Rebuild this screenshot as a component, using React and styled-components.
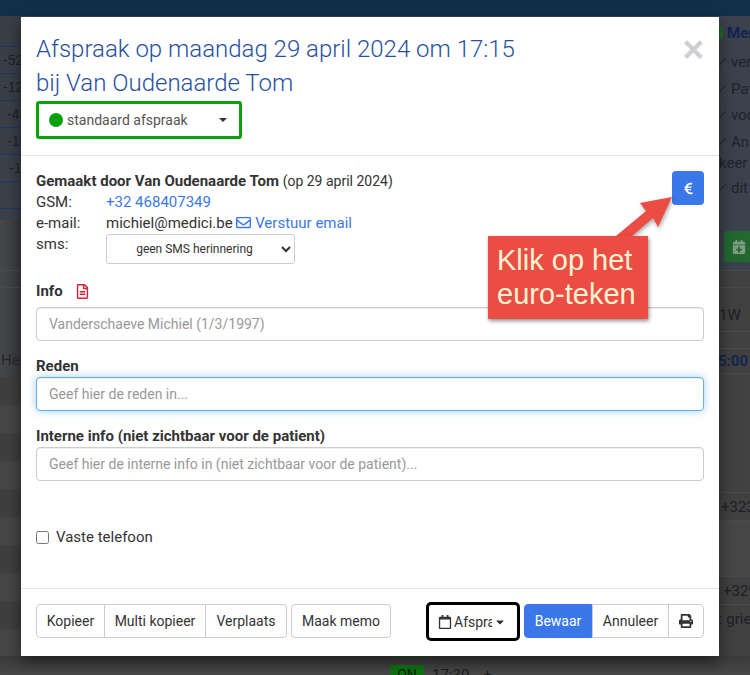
import React from "react";
import styled, { createGlobalStyle } from "styled-components";
import { FaEuroSign, FaRegEnvelope, FaRegFileAlt, FaRegCalendar, FaPrint, FaCaretDown, FaCalendarPlus } from "react-icons/fa";
import { Check } from "lucide-react";

const Global = createGlobalStyle`
  html, body { margin: 0; padding: 0; }
  body { font-family: Roboto, "Liberation Sans", sans-serif; font-size: 14px; color: #333; overflow: hidden; }
  * { box-sizing: border-box; }
`;
const Page = styled.div`
  position: relative; width: 750px; height: 675px; overflow: hidden; background: #414141;
  display: flex; flex-direction: column;
`;
const TopBar = styled.div`height: 16px; flex: none; background: #12304a;`;
const Middle = styled.div`flex: 1; display: flex; justify-content: space-between; min-height: 0;`;
const LeftStrip = styled.div`
  width: 21px; overflow: hidden; display: flex; flex-direction: column;
  background: linear-gradient(90deg, #47484a 0, #3a3b3f 100%);
`;
const TableBlock = styled.div`
  padding-top: 30px; height: 204px; flex: none; background: linear-gradient(180deg, #3a3e46, #3b404a);
`;
const NumRow = styled.div`
  height: 27px; border-top: 1px solid #1b3a6a; display: flex; align-items: center;
  white-space: nowrap; font-family: "Liberation Sans", sans-serif; color: #1f2024; font-size: 14px;
  padding-left: ${p => p.$x || 0}px;
`;
const FaintRow = styled.div`height: 17px; border-top: 1px solid #4a4a4a; flex: none; margin-top: ${p => p.$mt || 0}px;`;
const HeText = styled.div`margin-top: 47px; padding-left: 1px; font-size: 15px; color: #26282c; white-space: nowrap;`;
const Bands = styled.div`
  flex: 1; margin-top: 8px;
  background: repeating-linear-gradient(180deg, #3f3f3f 0 28px, #464646 28px 56px);
`;
const RightStrip = styled.div`
  width: 31px; overflow: hidden; display: flex; flex-direction: column; white-space: nowrap;
  background: #3c424d; font-size: 15px;
`;
const MerRow = styled.div`
  padding: 8px 0 0 0; height: 33px; flex: none; display: flex; gap: 4px; color: #102454; font-weight: 700; font-size: 15px;
`;
const GreenTick = styled.span`width: 4px; height: 12px; margin-top: 3px; background: #1f6b2a; flex: none;`;
const CheckRow = styled.div`
  height: ${p => p.$h || 26.5}px; flex: none; display: flex; align-items: center; gap: 3px; color: #1f232b;
  svg { color: #18261c; margin-left: -5px; flex: none; }
`;
const GreenButton = styled.div`
  margin: 26px 0 0 5px; width: 40px; height: 31px; flex: none; background: #23682f; border-radius: 3px 0 0 3px;
  display: flex; align-items: center; padding-left: 8px; color: #7d9d84;
`;
const RightRows = styled.div`
  flex: 1; margin-top: 8px; display: flex; flex-direction: column; background: #414141;
`;
const RightCell = styled.div`
  height: ${p => p.$h}px; flex: none; border-top: 1px solid #4b4b4b; color: ${p => p.$c || "#1d2026"}; font-weight: ${p => p.$w || 400};
  display: flex; align-items: center; padding: ${p => p.$t || 0}px 0 0 ${p => p.$l || 0}px;
  background: ${p => p.$bg || "transparent"};
`;
const ClippedTime = styled.span`margin-left: -1px;`;
const BottomStrip = styled.div`
  height: 19px; flex: none; background: linear-gradient(180deg, #3a3a3a, #484848); padding-left: 390px; overflow: hidden;
  color: #1c1c1c; font-size: 15px;
`;
const PrevBadge = styled.div`width: 38px; height: 2px; background: #2a4a2a; border-radius: 0 0 2px 2px; margin-bottom: 7px;`;
const BottomRow = styled.div`display: flex; align-items: flex-start;`;
const OnBadge = styled.span`
  width: 34px; height: 24px; background: #0f7312; color: #0c1c0c; text-align: center; border-radius: 2px; line-height: 20px; margin-right: 8px; font-size: 14px;
`;
const TimeText = styled.span`line-height: 20px; margin-right: ${p => p.$mr || 0}px;`;

const Modal = styled.div`
  position: absolute; top: 17px; left: 21px; width: 698px; height: 639px; background: #fff;
  display: flex; flex-direction: column; box-shadow: 0 5px 15px rgba(0,0,0,.5);
`;
const Header = styled.header`
  height: 139px; flex: none; padding: 15px 15px 0; border-bottom: 1px solid #e5e5e5; position: relative;
`;
const Title = styled.h4`
  margin: 0; font-weight: 300; font-size: 24px; line-height: 34px; color: #2850a0;
`;
const CloseX = styled.span`
  position: absolute; top: 10px; right: 15px; font-size: 37px; line-height: 46px; font-weight: 700; color: #cfcfcf;
  font-family: "Liberation Sans", sans-serif;
`;
const TypeSelect = styled.div`
  width: 206px; height: 38px; border: 3px solid #09a309; border-radius: 3px; margin-top: 1px; padding: 0 12px 0 10px;
  display: flex; align-items: center; color: #555; font-size: 14px; gap: 4px;
`;
const Dot = styled.span`width: 14px; height: 14px; border-radius: 50%; background: #0aa00a; flex: none;`;
const Caret = styled.span`
  margin-left: auto; width: 0; height: 0; border-left: 4.5px solid transparent; border-right: 4.5px solid transparent; border-top: 4.5px solid #333;
`;
const Body = styled.main`flex: 1; padding: 15px 15px 0; display: flex; flex-direction: column; min-height: 0;`;
const InfoBlock = styled.div`display: flex; justify-content: space-between; align-items: flex-start; height: 110px;`;
const InfoLines = styled.div`display: flex; flex-direction: column; font-size: 15px;`;
const MadeBy = styled.div`line-height: 20px; height: 21px; b { font-weight: 700; }`;
const MadeOn = styled.span`font-size: 14px;`;
const Line = styled.div`display: flex; line-height: 21px; height: 21px;`;
const LineKey = styled.span`width: 70px; flex: none;`;
const Link = styled.a`color: #3a78ea; text-decoration: none; svg { vertical-align: -2px; }`;
const SmsSelect = styled.select`
  width: 189px; height: 30px; margin-top: 0; background: #fff; border: 1px solid #ccc; border-radius: 3px; font-family: Roboto, sans-serif;
  font-size: 12px; color: #333; text-align: center; text-align-last: center;
`;
const EuroButton = styled.button`
  width: 32px; height: 34px; border: 0; border-radius: 4px; background: #3a78ea; color: #fff; padding: 0;
  display: flex; align-items: center; justify-content: center;
`;
const Label = styled.label`
  display: flex; align-items: center; gap: 12px; height: 20px; font-size: 15px; font-weight: 700; color: #333; margin-bottom: ${p => p.$mb ?? 5}px;
  svg { color: #dc1d36; }
`;
const Field = styled.div`height: ${p => p.$h}px; flex: none;`;
const Input = styled.input`
  display: block; width: 100%; height: 34px; border: 1px solid ${p => (p.$focus ? "#66afe9" : "#ccc")}; border-radius: 4px; padding: 0 12px;
  font-family: Roboto, sans-serif; font-size: 14px; color: #555; outline: none;
  box-shadow: ${p => (p.$focus ? "inset 0 1px 1px rgba(0,0,0,.075), 0 0 8px rgba(102,175,233,.6)" : "inset 0 1px 1px rgba(0,0,0,.075)")};
  &::placeholder { color: #999; opacity: 1; }
`;
const CheckLine = styled.label`display: flex; align-items: center; gap: 7px; margin-top: 32px; font-size: 15px; color: #333;
  input { margin: 0; width: 13px; height: 13px; }
`;
const Footer = styled.footer`
  height: 68px; flex: none; border-top: 1px solid #e5e5e5; padding: 15px 15px 0; display: flex; justify-content: space-between; align-items: flex-start;
`;
const Group = styled.div`display: flex; align-items: flex-start; gap: ${p => p.$gap || 0}px;`;
const Btn = styled.button`
  height: 34px; border: 1px solid ${p => (p.$primary ? "#3a78ea" : "#ccc")}; background: ${p => (p.$primary ? "#3a78ea" : "#fff")}; color: ${p => (p.$primary ? "#fff" : "#333")};
  font-family: Roboto, sans-serif; font-size: 14px; padding: 0; width: ${p => p.$w}px; margin-left: ${p => p.$ml || 0}px;
  border-radius: ${p => p.$r || "0"};
  display: flex; align-items: center; justify-content: center;
`;
const DropButton = styled.button`
  width: 94px; height: 39px; border: 3px solid #000; border-radius: 5px; background: #fff; color: #333; margin: -2px 4px 0 0; padding: 0 0 0 9px;
  display: flex; align-items: center; gap: 2px; font-family: Roboto, sans-serif; font-size: 14px;
`;
const Clip = styled.span`width: 38px; overflow: hidden; white-space: nowrap; display: block; text-align: left;`;
const RightGroup = styled.div`display: flex; align-items: flex-start;`;
const Callout = styled.div`
  position: absolute; left: 488px; top: 236px; width: 160px; height: 83px; background: #eb4d45; color: #fdf3d2;
  font-family: "Liberation Sans", sans-serif; font-size: 29px; line-height: 34px; padding: 7px 0 0 9px;
  box-shadow: 1px 2px 4px rgba(0,0,0,.45);
`;
const ArrowSvg = styled.svg`position: absolute; left: 600px; top: 190px; filter: drop-shadow(1px 2px 2px rgba(0,0,0,.35));`;

const Tick = () => <Check size={14} strokeWidth={1.7} />;

export default function App() {
  return (
    <Page>
      <Global />
      <TopBar />
      <Middle>
        <LeftStrip>
          <TableBlock>
            <NumRow $x={3}>-52</NumRow>
            <NumRow $x={3}>-12</NumRow>
            <NumRow $x={7}>-45</NumRow>
            <NumRow $x={7}>-15</NumRow>
            <NumRow $x={9}>-15</NumRow>
            <NumRow />
            <NumRow />
          </TableBlock>
          <FaintRow $mt={50} />
          <FaintRow />
          <HeText>Hei</HeText>
          <Bands />
        </LeftStrip>
        <RightStrip>
          <MerRow><GreenTick />Men</MerRow>
          <CheckRow><Tick />ver</CheckRow>
          <CheckRow><Tick />Pat</CheckRow>
          <CheckRow><Tick />voo</CheckRow>
          <CheckRow><Tick />An</CheckRow>
          <CheckRow $h={16}>keer z</CheckRow>
          <CheckRow $h={34}><Tick />dit</CheckRow>
          <GreenButton><FaCalendarPlus size={14} /></GreenButton>
          <RightRows>
            <RightCell $h={17} />
            <RightCell $h={44} $t={10}>1W</RightCell>
            <RightCell $h={17} />
            <RightCell $h={25} $c="#15264f" $w={700}><ClippedTime>5:00 -</ClippedTime></RightCell>
            <RightCell $h={119} $bg="#424242" />
            <RightCell $h={28} $l={2}>+323</RightCell>
            <RightCell $h={56} $bg="#474747" />
            <RightCell $h={28} $l={4}>+329</RightCell>
            <RightCell $h={28}>: griep</RightCell>
          </RightRows>
        </RightStrip>
      </Middle>
      <BottomStrip>
        <PrevBadge />
        <BottomRow>
          <OnBadge>ON</OnBadge>
          <TimeText $mr={14}>17:30</TimeText>
          <TimeText>+</TimeText>
        </BottomRow>
      </BottomStrip>

      <Modal>
        <Header>
          <Title>Afspraak op maandag 29 april 2024 om 17:15<br />bij Van Oudenaarde Tom</Title>
          <CloseX>×</CloseX>
          <TypeSelect><Dot />standaard afspraak<Caret /></TypeSelect>
        </Header>
        <Body>
          <InfoBlock>
            <InfoLines>
              <MadeBy><b>Gemaakt door Van Oudenaarde Tom</b> <MadeOn>(op 29 april 2024)</MadeOn></MadeBy>
              <Line><LineKey>GSM:</LineKey><Link>+32 468407349</Link></Line>
              <Line><LineKey>e-mail:</LineKey><span>michiel@medici.be <Link><FaRegEnvelope size={15} /> Verstuur email</Link></span></Line>
              <Line><LineKey>sms:</LineKey><SmsSelect defaultValue="geen"><option value="geen">geen SMS herinnering</option></SmsSelect></Line>
            </InfoLines>
            <EuroButton aria-label="euro"><FaEuroSign size={13} /></EuroButton>
          </InfoBlock>
          <Field $h={75}>
            <Label $mb={6}>Info <FaRegFileAlt size={15} /></Label>
            <Input placeholder="Vanderschaeve Michiel (1/3/1997)" />
          </Field>
          <Field $h={70}>
            <Label $mb={1}>Reden</Label>
            <Input $focus placeholder="Geef hier de reden in..." />
          </Field>
          <Field $h={70}>
            <Label $mb={1}>Interne info (niet zichtbaar voor de patient)</Label>
            <Input placeholder="Geef hier de interne info in (niet zichtbaar voor de patient)..." />
          </Field>
          <CheckLine><input type="checkbox" />Vaste telefoon</CheckLine>
        </Body>
        <Footer>
          <Group $gap={4}>
            <Group>
              <Btn $w={69} $r="4px 0 0 4px">Kopieer</Btn>
              <Btn $w={102} $ml={-1}>Multi kopieer</Btn>
              <Btn $w={82} $ml={-1} $r="0 4px 4px 0">Verplaats</Btn>
            </Group>
            <Btn $w={100} $r="4px">Maak memo</Btn>
          </Group>
          <RightGroup>
            <DropButton><FaRegCalendar size={14} /><Clip>Afspraak</Clip><FaCaretDown size={12} /></DropButton>
            <Btn $primary $w={68} $r="4px 0 0 4px">Bewaar</Btn>
            <Btn $w={77}>Annuleer</Btn>
            <Btn $w={36} $ml={-1} $r="0 4px 4px 0"><FaPrint size={14} /></Btn>
          </RightGroup>
        </Footer>
      </Modal>

      <ArrowSvg width="80" height="50" viewBox="0 0 80 50">
        <polygon points="72,7 40,13 46,21 16,46 32,46 53,28 58,37" fill="#eb4d45" />
      </ArrowSvg>
      <Callout>Klik op het<br />euro-teken</Callout>
    </Page>
  );
}
